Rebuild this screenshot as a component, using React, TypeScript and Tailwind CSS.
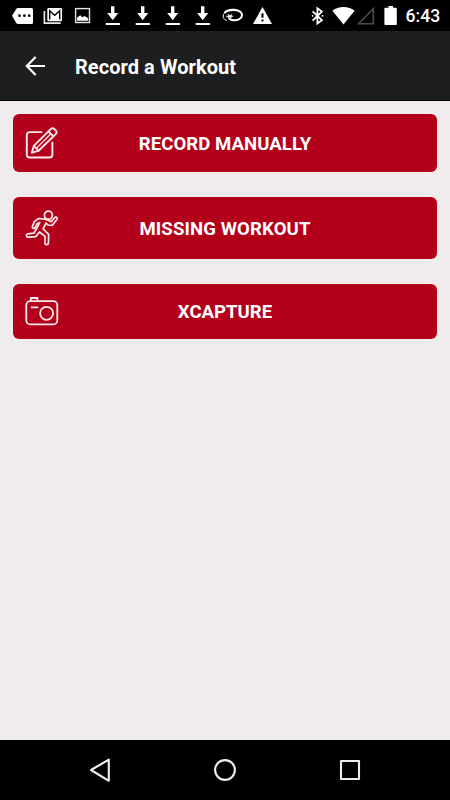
import React from "react"

interface IActionButton {
    label: string;
    height: string;
    labelClass?: string;
    icon: React.ReactNode;
}

const DownloadIcon = () => (
    <svg width="30" height="31" viewBox="0 0 30 31" fill="#fff">
        <path d="M13 6.2h3.4v6.7h3.8L14.7 20.2 9.2 12.9H13z" />
        <path d="M7.7 23h14.2v2H7.7z" />
    </svg>
)

const MessageIcon = () => (
    <svg width="30" height="31" viewBox="0 0 30 31">
        <path d="M10 8h13.5a1.5 1.5 0 0 1 1.5 1.5v13a1.5 1.5 0 0 1-1.5 1.5H10a2 2 0 0 1-1.6-.8L4 15.8l4.4-7A2 2 0 0 1 10 8z" fill="#fff" />
        <circle cx="11.5" cy="15.7" r="1.35" fill="#000" />
        <circle cx="16.4" cy="15.7" r="1.35" fill="#000" />
        <circle cx="21.2" cy="15.7" r="1.35" fill="#000" />
    </svg>
)

const MailIcon = () => (
    <svg width="30" height="31" viewBox="0 0 30 31">
        <path d="M6.4 11v12.2h16.3" fill="none" stroke="#e6e6e6" strokeWidth="1.7" />
        <rect x="9.3" y="8" width="14.7" height="13.2" rx="1.2" fill="#fff" />
        <path d="M11.7 19.4v-8.6l5 4.5 5-4.5v8.6" fill="none" stroke="#000" strokeWidth="1.4" />
    </svg>
)

const PictureIcon = () => (
    <svg width="30" height="31" viewBox="0 0 30 31">
        <rect x="7.6" y="8.6" width="13.9" height="13.9" fill="none" stroke="#e6e6e6" strokeWidth="1.4" />
        <path d="M9 20.7v-2.9l3.2-2.6 2.2 2 2.2-1.3 3.6 2.4v2.4z" fill="#fff" />
    </svg>
)

const OrbitIcon = () => (
    <svg width="30" height="31" viewBox="0 0 30 31" fill="none" stroke="#fff">
        <path d="M6.4 13C8.4 10.6 12.5 9.6 16.5 9.9c5 .4 7.8 2.7 7.5 5.5-.4 3.3-4.4 5-8.6 4.8-2.3-.1-3.9-.8-4.6-1.8" strokeWidth="2.1" />
        <path d="M6.2 13.4c-1.3 1.8-1.4 3.5-.4 5 .7 1.2 1.8 1.9 3 2.3" strokeWidth="1" />
        <path d="M8 16.3h7M10 14l1.6 2.2 2.4-1.6M9.8 18.2l2-1.8 1.6 1.8" strokeWidth="1.1" />
    </svg>
)

const WarningIcon = () => (
    <svg width="30" height="31" viewBox="0 0 30 31">
        <path d="M14.5 7 24 24H5z" fill="#fff" />
        <path d="M13.5 13.3h2v4.5h-2zM13.5 19.6h2v2h-2z" fill="#000" />
    </svg>
)

const BluetoothIcon = () => (
    <svg width="16" height="31" viewBox="0 0 16 31" fill="none" stroke="#fff" strokeWidth="1.8">
        <path d="M2.6 11.3l9.3 8.9-4.5 3.3V8.2l4.5 3.3-9.3 9.1" />
        <circle cx="2.6" cy="15.8" r=".9" fill="#fff" stroke="none" />
        <circle cx="12.5" cy="15.8" r=".9" fill="#fff" stroke="none" />
    </svg>
)

const WifiIcon = () => (
    <svg width="24" height="31" viewBox="0 0 24 31" fill="#fff">
        <path d="M11.5 24.6.4 10.7C3.5 8.2 7.3 7 11.5 7s8 1.2 11.1 3.7z" />
    </svg>
)

const SignalIcon = () => (
    <svg width="19" height="31" viewBox="0 0 19 31" fill="none" stroke="#4d4d4d" strokeWidth="1.6">
        <path d="M16.3 8.8v15H1.5z" />
    </svg>
)

const BatteryIcon = () => (
    <svg width="14" height="31" viewBox="0 0 14 31" fill="#fff">
        <path d="M4.5 6h4.6v1.7h2.7a1 1 0 0 1 1 1V24a1 1 0 0 1-1 1H1.4a1 1 0 0 1-1-1V8.7a1 1 0 0 1 1-1h3.1z" />
    </svg>
)

const StatusBar = () => {

    return (
        <div className="flex h-[31px] shrink-0 items-center bg-black pl-2 text-white">
            <MessageIcon />
            <MailIcon />
            <PictureIcon />
            <DownloadIcon />
            <DownloadIcon />
            <DownloadIcon />
            <DownloadIcon />
            <OrbitIcon />
            <WarningIcon />
            <div className="ml-auto flex items-center pr-[10px]">
                <BluetoothIcon />
                <div className="ml-[6px] flex"><WifiIcon /></div>
                <div className="ml-px flex"><SignalIcon /></div>
                <div className="ml-2 flex"><BatteryIcon /></div>
                <span className="ml-[7.5px] w-[34.5px] pt-[2px] text-[17.6px] font-medium leading-[29px]">6:43</span>
            </div>
        </div>
    )
}

const EditIcon = () => (
    <svg width="34" height="34" viewBox="0 0 34 34" fill="none" stroke="#fbe9eb" strokeWidth="1.9" strokeLinejoin="round" strokeLinecap="round">
        <path d="M16.5 6.1H4.8a3 3 0 0 0-3 3v19.4a3 3 0 0 0 3 3h19.6a3 3 0 0 0 3-3V16.5" />
        <path d="M6.8 26.8l2-6.9L25.7 3.1a2.7 2.7 0 0 1 3.8 0l1.2 1.2a2.7 2.7 0 0 1 0 3.8L13.6 24.7z" />
        <path d="M23.4 5.4l4.9 4.8M8.8 19.9l4.8 4.8" />
        <path d="M11.5 22.1L25.4 8.3" strokeWidth="1.3" />
    </svg>
)

const RunnerIcon = () => (
    <svg width="34" height="36" viewBox="0 0 34 36" fill="none" stroke="#fbe9eb" strokeWidth="1.7" strokeLinejoin="round" strokeLinecap="round">
        <circle cx="23.4" cy="5.2" r="4" />
        <path d="M20 9.2 13.6 8.5 9.4 11.6 7.4 16.4c-.6 2 1.8 2.9 2.8 1.1l1.5-3.5 3.1-1.6-3.6 6.9-2.3 3.9-6.2.6c-2 .4-1.7 3.4.4 3.3l7.6-.5 3.8-4.6 5.6 4.3-.2 6.8c.1 2.1 3.4 2.1 3.5 0l.3-8.8-5.6-5.5 3-5.8 2 2 4.3.3 4.6-6c1-1.7-1.2-3.1-2.5-1.6l-3.3 4-3.4-1.6z" />
    </svg>
)

const CameraIcon = () => (
    <svg width="34" height="30" viewBox="0 0 34 30" fill="none" stroke="#fbe9eb" strokeWidth="1.8">
        <rect x="1.3" y="5.2" width="31" height="23.2" rx="4" />
        <path d="M5.8 5.2V2h6.6v3.2M5.8 11.3h7.4" />
        <circle cx="21.6" cy="17.3" r="6.5" />
    </svg>
)

const ActionButton = (props: IActionButton) => {

    const {
        label,
        height,
        labelClass,
        icon
    } = props;

    return (
        <button className={`grid w-full grid-cols-[46px_1fr_46px] items-center rounded-[6px] bg-[#b3001b] text-white ${height}`}>
            <span className="flex pl-[11.5px]">{icon}</span>
            <span className={`pt-[2px] text-center text-[18.6px] font-bold leading-6 ${labelClass || ''}`}>{label}</span>
        </button>
    )
}

const NavBar = () => {

    return (
        <nav className="flex h-[60px] shrink-0 items-center justify-between bg-black px-[87px]">
            <svg width="26" height="26" viewBox="0 0 26 26" fill="none" stroke="#eee" strokeWidth="2.1" strokeLinejoin="round">
                <path d="M21.8 2.6v21.2L4 13z" />
            </svg>
            <svg width="26" height="26" viewBox="0 0 26 26" fill="none" stroke="#eee" strokeWidth="2.1">
                <circle cx="13" cy="13" r="9.9" />
            </svg>
            <svg width="26" height="26" viewBox="0 0 26 26" fill="none" stroke="#eee" strokeWidth="2.1" strokeLinejoin="round">
                <path d="M4 4h18v18H4z" />
            </svg>
        </nav>
    )
}

const App = () => {

    return (
        <div className="flex h-[800px] w-[450px] flex-col overflow-hidden bg-[#f0eced] font-['Roboto',sans-serif]">

            <StatusBar />

            <header className="flex h-[70px] shrink-0 items-center border-b border-black bg-[#1d1e20] pl-[25px] text-white">
                <svg width="21" height="22" viewBox="0 0 21 22" fill="none" stroke="#fff" strokeWidth="2.2">
                    <path d="M20 11H2M10.6 1.9 1.8 11l8.8 9.1" />
                </svg>
                <h1 className="ml-[29px] pt-[2px] text-[20px] font-bold leading-6 tracking-[0.06px]">Record a Workout</h1>
            </header>

            <main className="flex grow flex-col px-[13px] pt-[13px]">
                <ActionButton label="RECORD MANUALLY" height="h-[58px]" labelClass="tracking-[0.04px]" icon={<EditIcon />} />
                <div className="mt-[25px]">
                    <ActionButton label="MISSING WORKOUT" height="h-[61.5px]" labelClass="tracking-[0.1px]" icon={<RunnerIcon />} />
                </div>
                <div className="mt-[25.5px]">
                    <ActionButton label="XCAPTURE" height="h-[54.5px]" icon={<CameraIcon />} />
                </div>
            </main>

            <NavBar />

        </div>
    )
};

export default App;
